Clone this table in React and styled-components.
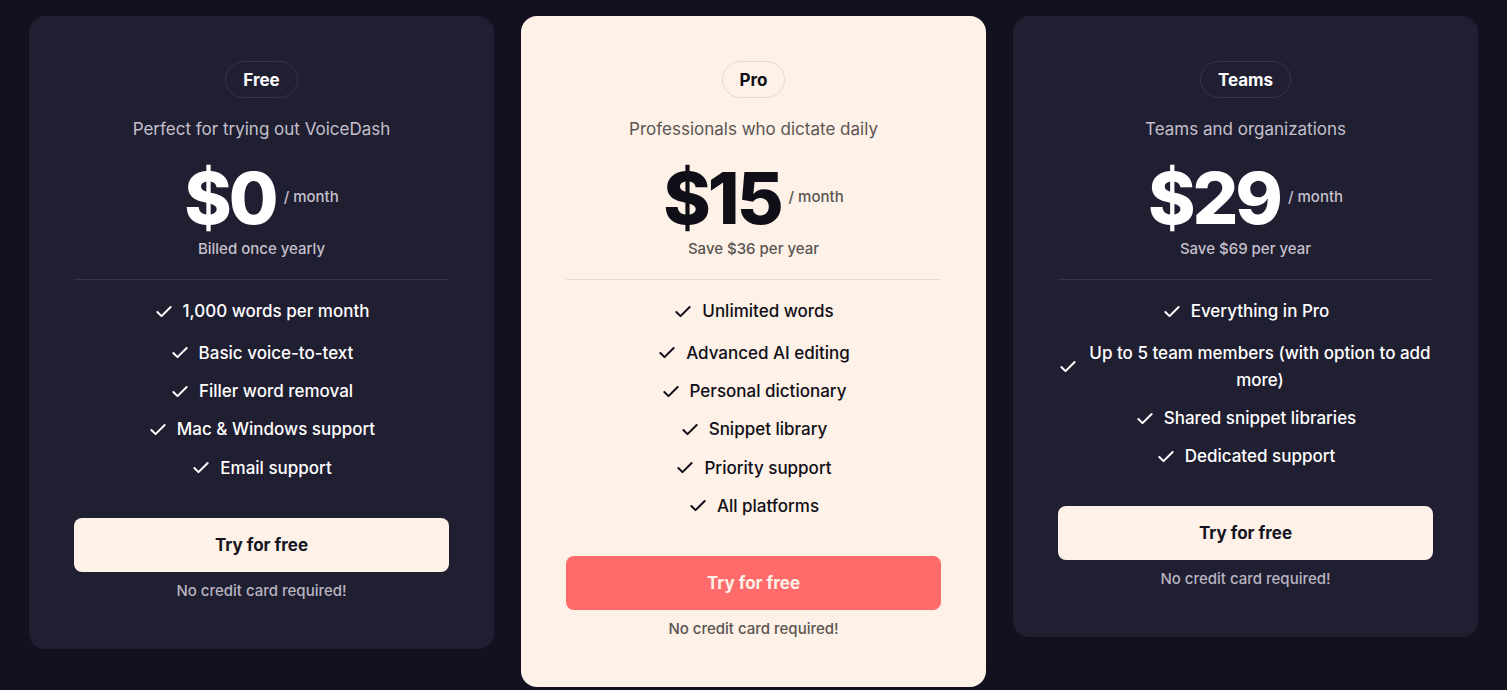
import React from 'react';
import styled, { createGlobalStyle, css } from 'styled-components';
import { Check } from 'lucide-react';

const GlobalStyle = createGlobalStyle`
  html, body {
    margin: 0;
    padding: 0;
    background: #13111f;
  }
  body {
    font-family: Inter, "Noto Sans", sans-serif;
    -webkit-font-smoothing: antialiased;
  }
`;

const Page = styled.div`
  display: flex;
  align-items: flex-start;
  justify-content: center;
  gap: 27px;
  padding: 16px 29px;
  min-height: 690px;
  box-sizing: border-box;
`;

const Card = styled.div`
  width: 465px;
  flex-shrink: 0;
  box-sizing: border-box;
  padding: 45px 45px 48px;
  border-radius: 16px;
  display: flex;
  flex-direction: column;
  align-items: center;
  background: ${p => (p.$light ? '#fdf1e8' : '#201e31')};
  color: ${p => (p.$light ? '#100e16' : '#ffffff')};
`;

const Badge = styled.div`
  height: 37px;
  box-sizing: border-box;
  padding: 0 17px;
  display: flex;
  align-items: center;
  border-radius: 999px;
  border: 1px solid ${p => (p.$light ? '#ead9cc' : '#35334a')};
  font-size: 17px;
  font-weight: 700;
`;

const Description = styled.p`
  margin: 19px 0 0;
  font-size: 17px;
  line-height: 24px;
  color: ${p => (p.$light ? '#5b5552' : '#c4c0cc')};
`;

const PriceRow = styled.div`
  margin-top: 21px;
  display: flex;
  align-items: flex-start;
  gap: 8px;
`;

const Amount = styled.span`
  font-size: 72px;
  line-height: 72px;
  font-weight: 800;
  letter-spacing: -3px;
`;

const Period = styled.span`
  margin-top: 25px;
  font-size: 15px;
  line-height: 20px;
  font-weight: 500;
  color: ${p => (p.$light ? '#5b5552' : '#c4c0cc')};
`;

const Subnote = styled.div`
  margin-top: 5px;
  font-size: 15px;
  line-height: 20px;
  font-weight: 500;
  color: ${p => (p.$light ? '#5b5552' : '#c4c0cc')};
`;

const Divider = styled.hr`
  width: 100%;
  margin: 20px 0 18px;
  border: 0;
  border-top: 1px solid ${p => (p.$light ? '#e9dcd2' : '#35334a')};
`;

const FeatureList = styled.ul`
  list-style: none;
  margin: 0;
  padding: 0;
  width: 100%;
  display: flex;
  flex-direction: column;
  gap: 11.3px;
`;

const Feature = styled.li`
  display: flex;
  align-items: center;
  justify-content: center;
  gap: 9px;
  font-size: 17px;
  line-height: 27px;
  font-weight: 500;
  text-align: center;

  &:first-child {
    margin-bottom: 3.5px;
  }

  svg {
    flex-shrink: 0;
  }
`;

const Button = styled.button`
  margin-top: 36px;
  width: 100%;
  height: 54px;
  border: 0;
  border-radius: 8px;
  font-family: inherit;
  font-size: 17px;
  font-weight: 700;
  cursor: pointer;
  ${p =>
    p.$accent
      ? css`
          background: #ff6b6b;
          color: #fdf1e8;
        `
      : css`
          background: #fdf1e8;
          color: #16141f;
        `}
`;

const Footnote = styled.div`
  margin-top: 9px;
  font-size: 15px;
  line-height: 20px;
  font-weight: 500;
  color: ${p => (p.$light ? '#5b5552' : '#b9b5c0')};
`;

const plans = [
  {
    name: 'Free',
    description: 'Perfect for trying out VoiceDash',
    price: '$0',
    note: 'Billed once yearly',
    features: [
      '1,000 words per month',
      'Basic voice-to-text',
      'Filler word removal',
      'Mac & Windows support',
      'Email support',
    ],
  },
  {
    name: 'Pro',
    light: true,
    description: 'Professionals who dictate daily',
    price: '$15',
    note: 'Save $36 per year',
    features: [
      'Unlimited words',
      'Advanced AI editing',
      'Personal dictionary',
      'Snippet library',
      'Priority support',
      'All platforms',
    ],
  },
  {
    name: 'Teams',
    description: 'Teams and organizations',
    price: '$29',
    note: 'Save $69 per year',
    features: [
      'Everything in Pro',
      'Up to 5 team members (with option to add more)',
      'Shared snippet libraries',
      'Dedicated support',
    ],
  },
];

const PlanCard = ({ plan }) => {
  const light = plan.light;
  return (
    <Card $light={light}>
      <Badge $light={light}>{plan.name}</Badge>
      <Description $light={light}>{plan.description}</Description>
      <PriceRow>
        <Amount>{plan.price}</Amount>
        <Period $light={light}>/ month</Period>
      </PriceRow>
      <Subnote $light={light}>{plan.note}</Subnote>
      <Divider $light={light} />
      <FeatureList>
        {plan.features.map(f => (
          <Feature key={f}>
            <Check size={20} strokeWidth={2.4} />
            <span>{f}</span>
          </Feature>
        ))}
      </FeatureList>
      <Button $accent={light}>Try for free</Button>
      <Footnote $light={light}>No credit card required!</Footnote>
    </Card>
  );
};

const App = () => {
  return (
    <>
      <GlobalStyle />
      <Page>
        {plans.map(p => (
          <PlanCard key={p.name} plan={p} />
        ))}
      </Page>
    </>
  );
};

export default App;
